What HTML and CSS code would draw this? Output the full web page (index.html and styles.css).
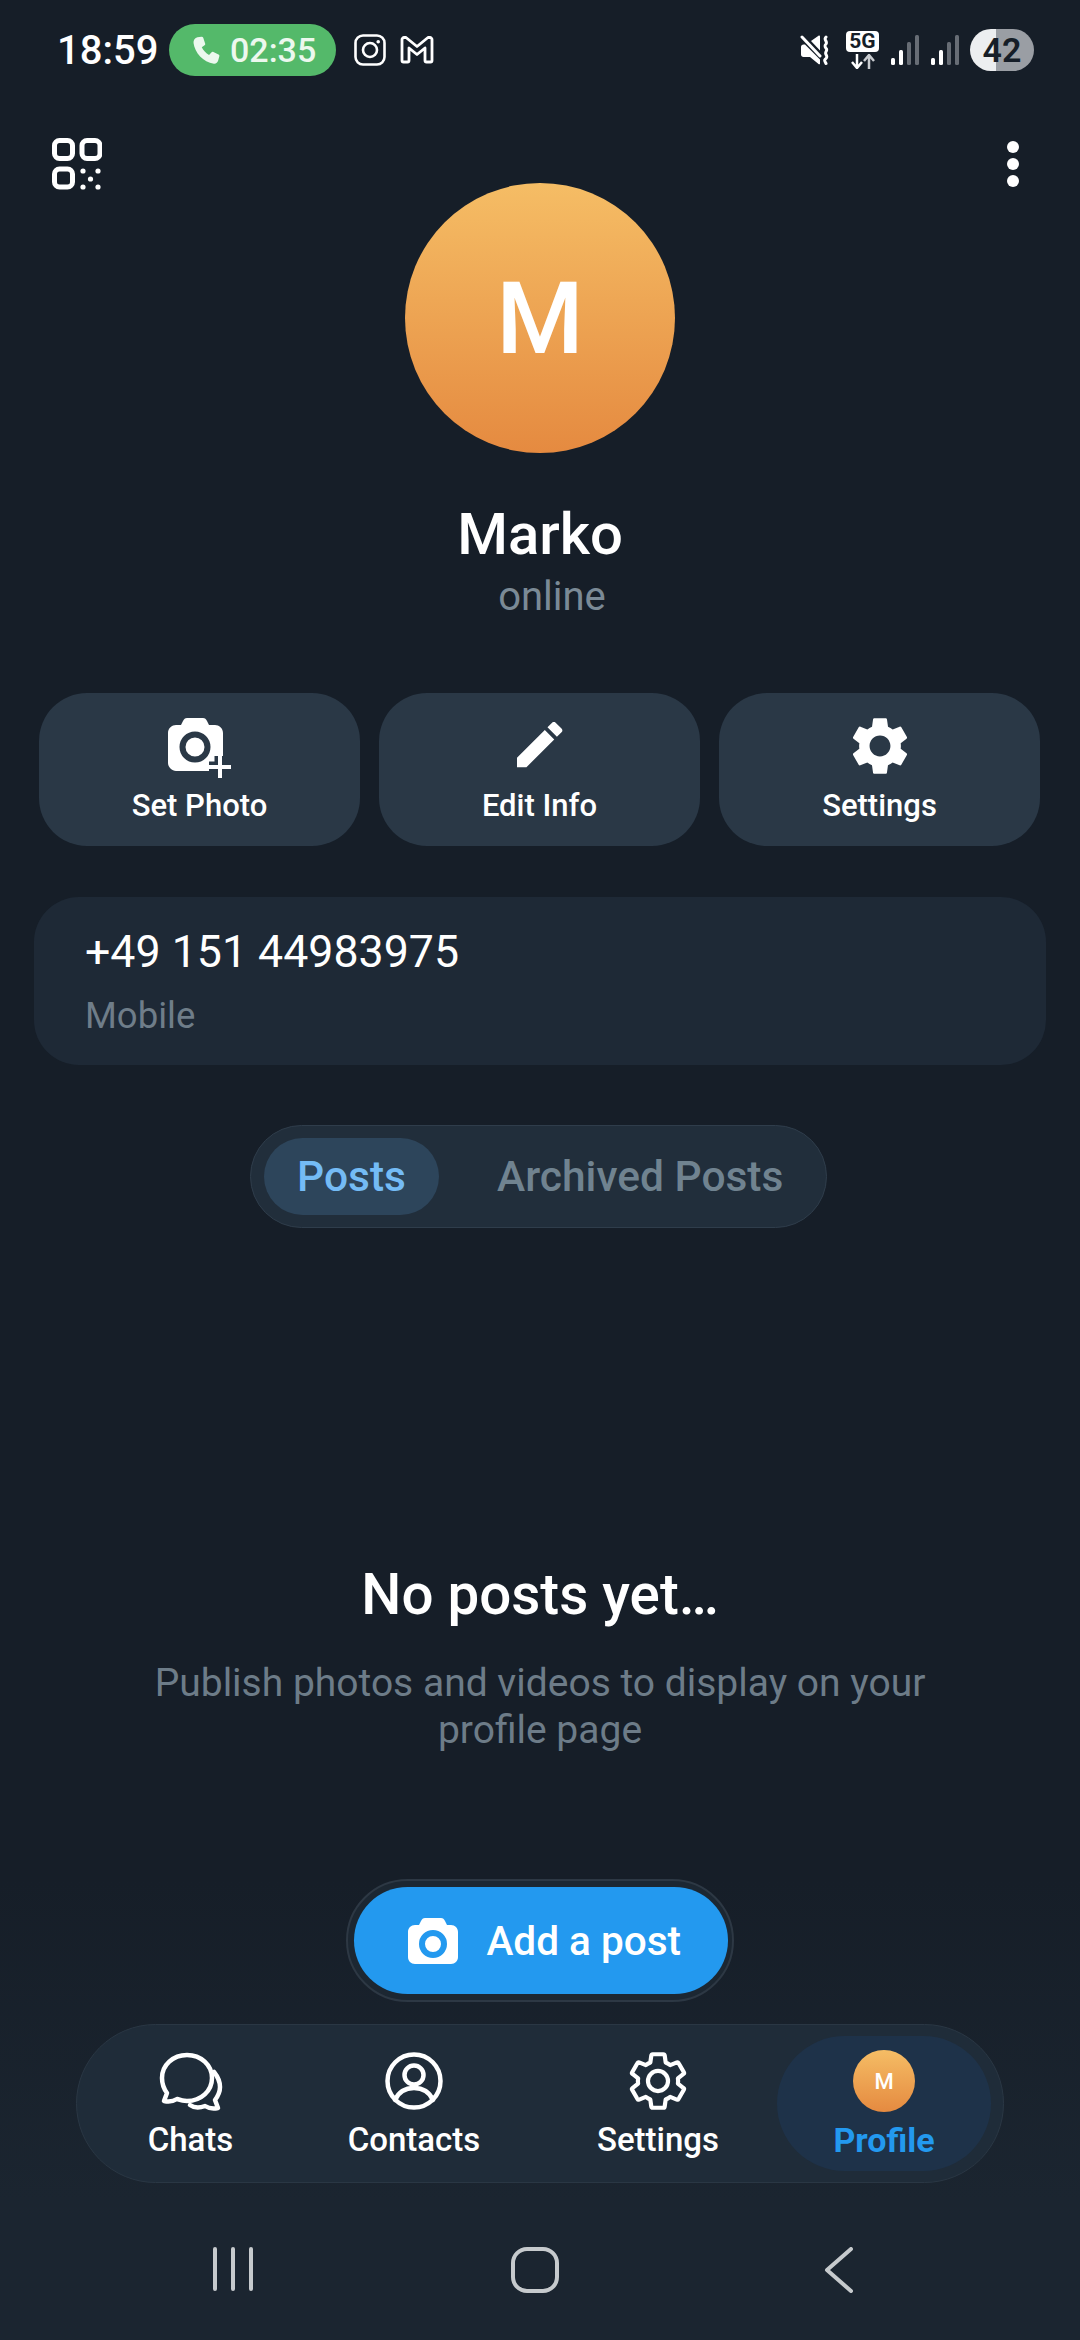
FILE: index.html
```html
<!DOCTYPE html>
<html lang="en">
<head>
<meta charset="utf-8">
<title>Profile</title>
<link rel="stylesheet" href="styles.css">
</head>
<body>
<div class="page">
  <main class="main">
    <div class="status">
      <div class="status-left">
        <span class="time">18:59</span>
        <span class="call">
          <svg class="call-icon" viewBox="3 1.500 19 20"><path d="M6.6 2.4 9.3 2c.6-.1 1.100.2 1.300.7l1.300 3.900c.2.5 0 1-.4 1.300L9.600 9.300c.9 2 2.900 4.200 5 5.300l1.600-1.800c.4-.4.9-.5 1.400-.3l3.500 1.700c.5.2.8.8.6 1.300l-.8 2.900c-.4 1.400-1.600 2.400-3 2.200C10.600 19.500 4.700 13 3.900 6.300 3.700 4.400 4.900 2.800 6.600 2.400z"/></svg>
          <span>02:35</span>
        </span>
        <svg class="ig" viewBox="0 0 32 32"><rect x="1.500" y="1.500" width="29" height="29" rx="7.500"/><circle cx="16" cy="16" r="7"/><circle class="dot" cx="24.200" cy="7.800" r="1.800"/></svg>
        <svg class="gm" viewBox="0 0 34 28"><path d="M2 3.500C2 2.500 3 1.500 4 1.500h2l11 9 11-9h2c1 0 2 1 2 2v21c0 1-.6 1.500-1.500 1.500h-4c-.9 0-1.500-.5-1.500-1.500V12l-8 6.500L9 12v12.500c0 1-.6 1.500-1.500 1.500h-4c-.9 0-1.500-.5-1.500-1.500z"/></svg>
      </div>
      <div class="status-right">
        <svg class="mute" viewBox="0 0 30 30"><path class="f" d="M1 12c0-1.500 1-2.500 2.500-2.500H5l15 15V29c-.3.4-1 .5-1.500.1L10 22H3.500C2 22 1 21 1 19.500zM11 6l7.500-5.300c.6-.4 1.500 0 1.500.8v14z"/><path class="s" d="M2 2l18 19"/><path class="s" d="M26 2c-3 3 2 4 0 7-2 2-1 3 .5 5 1 2-2 3-.5 5.500 1 2 1.500 3-1 5-1 1 0 2 1 4"/></svg>
        <span class="net">
          <span class="g5">5G</span>
          <svg class="arrows" viewBox="0 0 26 15"><path d="M7 0v13M2 8l5 6 5-6"/><path class="up" d="M19 15V2M14 7l5-6 5 6"/></svg>
        </span>
        <svg class="sig" viewBox="0 0 28 30"><rect class="on" y="23" width="4" height="7" rx="1.500"/><rect class="on" x="8" y="15" width="4" height="15" rx="1.500"/><rect class="off" x="16" y="7" width="4" height="23" rx="1.500"/><rect class="off" x="24" width="4" height="30" rx="1.500"/></svg>
        <svg class="sig" viewBox="0 0 28 30"><rect class="on" y="23" width="4" height="7" rx="1.500"/><rect class="on" x="8" y="15" width="4" height="15" rx="1.500"/><rect class="off" x="16" y="7" width="4" height="23" rx="1.500"/><rect class="off" x="24" width="4" height="30" rx="1.500"/></svg>
        <span class="batt">42</span>
      </div>
    </div>

    <div class="hero">
      <svg class="qr" viewBox="0 0 50 52"><rect x="2.500" y="2.500" width="18" height="18" rx="5"/><rect x="30" y="2.500" width="18" height="18" rx="5"/><rect x="2.500" y="31" width="18" height="18" rx="5"/><circle class="d" cx="31" cy="33" r="2.600"/><circle class="d" cx="46" cy="33" r="2.600"/><circle class="d" cx="38.500" cy="41" r="2.600"/><circle class="d" cx="31" cy="49" r="2.600"/><circle class="d" cx="46" cy="49" r="2.600"/></svg>
      <div class="identity">
        <div class="avatar">M</div>
        <div class="name">Marko</div>
        <div class="presence">online</div>
      </div>
      <div class="kebab"><i></i><i></i><i></i></div>
    </div>

    <div class="actions">
      <div class="action">
        <svg class="act-icon" viewBox="0 0 66 62"><path class="w" d="M20 1h16c2 0 3 1 4 3l2 4h6c4 0 8 3 8 8v30c0 4-3 8-8 8H9c-4 0-8-4-8-8V16c0-5 4-8 8-8h5l2-4c1-2 2-3 4-3z"/><circle class="lens" cx="28" cy="30" r="12.500"/><path class="plus-gap" d="M53 39v22M42 50h22"/><path class="plus" d="M53 39v22M42 50h22"/></svg>
        <span>Set Photo</span>
      </div>
      <div class="action">
        <svg class="act-icon pen" viewBox="3 3 18.300 18.300"><path class="w" d="M3 17.250V21h3.750L17.810 9.940l-3.750-3.750L3 17.250zM20.710 7.040a1 1 0 0 0 0-1.410l-2.340-2.340a1 1 0 0 0-1.410 0l-1.830 1.830 3.750 3.750 1.830-1.830z"/></svg>
        <span>Edit Info</span>
      </div>
      <div class="action">
        <svg class="act-icon gear" viewBox="2.600 2 18.800 20"><path class="w" d="M19.140 12.940c.04-.3.06-.61.06-.94 0-.32-.02-.64-.07-.94l2.030-1.580c.18-.14.23-.41.12-.61l-1.920-3.320c-.12-.22-.37-.29-.59-.22l-2.390.96c-.5-.38-1.030-.7-1.620-.94l-.36-2.540c-.04-.24-.24-.41-.48-.41h-3.840c-.24 0-.43.17-.47.41l-.36 2.540c-.59.24-1.130.57-1.620.94l-2.390-.96c-.22-.08-.47 0-.59.22L2.740 8.870c-.12.21-.08.47.12.61l2.030 1.580c-.05.3-.09.63-.09.94s.02.64.07.94l-2.030 1.580c-.18.14-.23.41-.12.61l1.920 3.320c.12.22.37.29.59.22l2.390-.96c.5.38 1.030.7 1.620.94l.36 2.540c.05.24.24.41.48.41h3.840c.24 0 .44-.17.47-.41l.36-2.540c.59-.24 1.130-.56 1.620-.94l2.390.96c.22.08.47 0 .59-.22l1.920-3.320c.12-.22.07-.47-.12-.61l-2.010-1.580zM12 15.600c-1.980 0-3.600-1.620-3.600-3.600s1.620-3.600 3.600-3.600 3.600 1.620 3.600 3.600-1.620 3.600-3.600 3.600z"/></svg>
        <span>Settings</span>
      </div>
    </div>

    <div class="phone">
      <div class="phone-num">+49 151 44983975</div>
      <div class="phone-label">Mobile</div>
    </div>

    <div class="tabs-wrap">
      <div class="tabs">
        <span class="tab active">Posts</span>
        <span class="tab">Archived Posts</span>
      </div>
    </div>

    <div class="empty">
      <div class="empty-title">No posts yet…</div>
      <div class="empty-sub">Publish photos and videos to display on your<br>profile page</div>
    </div>

    <div class="cta-wrap">
      <div class="cta-ring">
        <div class="cta">
          <svg class="cta-icon" viewBox="0 0 52 48"><path class="w" d="M18 1h16c2 0 3 1 4 3l2 4h4c4 0 7 3 7 7v25c0 4-3 7-7 7H8c-4 0-7-3-7-7V15c0-4 3-7 7-7h4l2-4c1-2 2-3 4-3z"/><circle class="cta-lens" cx="26" cy="27" r="11"/></svg>
          <span>Add a post</span>
        </div>
      </div>
    </div>
  </main>

  <footer class="footer">
    <nav class="nav">
      <div class="nav-item item-chats">
        <svg class="nav-icon chats-icon" viewBox="0 0 66 58"><path d="M29 3C15 3 4 13 4 26c0 6 2 11 5 15l-3 8c5 1 10 0 13-2 3 1 6 2 10 2 14 0 25-10 25-23S43 3 29 3z"/><path d="M56 20c4 5 6 10 6 15 0 5-2 9-5 13l3 8c-5 1-10 0-13-2-5 2-11 2-15-1"/></svg>
        <span>Chats</span>
      </div>
      <div class="nav-item item-contacts">
        <svg class="nav-icon" viewBox="0 0 60 58"><circle cx="30" cy="29" r="26.500"/><circle cx="30" cy="23" r="9.500"/><path d="M11 48c4-9 11-12 19-12s15 3 19 12"/></svg>
        <span>Contacts</span>
      </div>
      <div class="nav-item item-settings">
        <svg class="nav-icon" viewBox="2 1.600 20 20.800"><path class="thin" d="M19.140 12.940c.04-.3.06-.61.06-.94 0-.32-.02-.64-.07-.94l2.030-1.580c.18-.14.23-.41.12-.61l-1.920-3.320c-.12-.22-.37-.29-.59-.22l-2.390.96c-.5-.38-1.030-.7-1.620-.94l-.36-2.540c-.04-.24-.24-.41-.48-.41h-3.840c-.24 0-.43.17-.47.41l-.36 2.540c-.59.24-1.130.57-1.620.94l-2.390-.96c-.22-.08-.47 0-.59.22L2.740 8.870c-.12.21-.08.47.12.61l2.030 1.580c-.05.3-.09.63-.09.94s.02.64.07.94l-2.030 1.580c-.18.14-.23.41-.12.61l1.920 3.320c.12.22.37.29.59.22l2.390-.96c.5.38 1.030.7 1.620.94l.36 2.540c.05.24.24.41.48.41h3.840c.24 0 .44-.17.47-.41l.36-2.540c.59-.24 1.130-.56 1.620-.94l2.390.96c.22.08.47 0 .59-.22l1.920-3.320c.12-.22.07-.47-.12-.61l-2.010-1.580zM12 15.600c-1.980 0-3.600-1.620-3.600-3.600s1.620-3.600 3.600-3.600 3.600 1.620 3.600 3.600-1.620 3.600-3.600 3.600z"/></svg>
        <span>Settings</span>
      </div>
      <div class="nav-item item-profile">
        <div class="mini-avatar">M</div>
        <span>Profile</span>
      </div>
    </nav>
    <div class="sysnav">
      <svg class="sys recents" viewBox="0 0 42 44"><path d="M3 2v40M21 2v40M39 2v40"/></svg>
      <svg class="sys home" viewBox="0 0 48 46"><rect x="2" y="2" width="44" height="42" rx="14"/></svg>
      <svg class="sys back" viewBox="0 0 30 46"><path d="M27 2 3 23l24 21"/></svg>
    </div>
  </footer>
</div>
</body>
</html>
```

FILE: styles.css
```css
* { box-sizing: border-box; }
html, body { margin: 0; padding: 0; }
body {
  background: #161e28;
  color: #fff;
  font-family: Roboto, "Noto Sans", sans-serif;
}
.page {
  width: 1080px;
  height: 2340px;
  display: flex;
  flex-direction: column;
  overflow: hidden;
  background: linear-gradient(180deg, #161e28 1880px, #1b2530 2200px);
}
.main { flex: 1; display: flex; flex-direction: column; min-height: 0; }

/* status bar */
.status {
  height: 100px;
  padding: 0 46px 0 57px;
  display: flex;
  align-items: center;
  justify-content: space-between;
}
.status-left { display: flex; align-items: center; }
.time { font-size: 40px; font-weight: 500; width: 112px; }
.call {
  width: 167px;
  height: 52px;
  border-radius: 26px;
  background: #54b96a;
  color: #ecf8ee;
  display: flex;
  align-items: center;
  padding-left: 23px;
  gap: 10px;
  font-size: 34px;
  font-weight: 500;
}
.call-icon { width: 28px; height: 29px; fill: #ecf8ee; flex: none; }
.ig { width: 32px; height: 32px; margin-left: 18px; fill: none; stroke: #fff; stroke-width: 2.600; }
.ig .dot { fill: #fff; stroke: none; }
.gm { width: 36px; height: 28px; margin-left: 13px; fill: none; stroke: #fff; stroke-width: 2.800; stroke-linejoin: round; }
.status-right { display: flex; align-items: center; }
.mute { width: 30px; height: 30px; fill: none; }
.mute .f { fill: #fff; }
.mute .s { stroke: #fff; stroke-width: 3; stroke-linecap: round; }
.net { width: 33px; margin-left: 16px; display: flex; flex-direction: column; align-items: center; gap: 2px; }
.g5 {
  width: 33px;
  height: 21px;
  border-radius: 4px;
  background: #fff;
  color: #161e28;
  font-size: 21px;
  line-height: 21px;
  font-weight: 700;
  text-align: center;
}
.arrows { width: 26px; height: 15px; fill: none; stroke: #fff; stroke-width: 2.500; }
.arrows .up { stroke: #c9ccd0; }
.sig { width: 28px; height: 30px; margin-left: 12px; }
.sig .on { fill: #fff; }
.sig .off { fill: #676d75; }
.batt {
  width: 64px;
  height: 42px;
  margin-left: 11px;
  border-radius: 21px;
  background: linear-gradient(90deg, #eceef0 41%, #9a9ea4 41%);
  color: #161e28;
  font-size: 34px;
  line-height: 42px;
  font-weight: 600;
  text-align: center;
}

/* hero */
.hero {
  padding: 38px 52px 0;
  display: grid;
  grid-template-columns: 1fr auto 1fr;
  align-items: start;
}
.qr { width: 50px; height: 52px; fill: none; stroke: #fff; stroke-width: 5; }
.qr .d { fill: #fff; stroke: none; }
.identity { display: flex; flex-direction: column; align-items: center; margin-top: 45px; }
.avatar {
  width: 270px;
  height: 270px;
  border-radius: 50%;
  background: linear-gradient(180deg, #f5bd65, #e58a40);
  display: flex;
  align-items: center;
  justify-content: center;
  font-size: 100px;
  font-weight: 500;
}
.name { margin-top: 49px; font-size: 58px; line-height: 64px; font-weight: 500; }
.presence { margin-left: 24px; font-size: 40px; line-height: 46px; margin-top: 8px; color: #7b8a96; }
.kebab { justify-self: end; display: flex; flex-direction: column; gap: 5px; padding-top: 3px; margin-right: 9px; }
.kebab i { width: 12px; height: 12px; border-radius: 50%; background: #fff; display: block; }

/* actions */
.actions { margin-top: 73px; padding: 0 40px 0 39px; display: grid; grid-template-columns: repeat(3, 1fr); gap: 19px; }
.action {
  height: 153px;
  border-radius: 48px;
  background: #2a3846;
  display: flex;
  flex-direction: column;
  align-items: center;
  font-size: 31px;
  font-weight: 500;
  position: relative;
}
.action span { position: absolute; top: 94px; line-height: 38px; }
.act-icon { margin-top: 24px; width: 66px; height: 62px; }
.w { fill: #fff; }
.lens { fill: #fff; stroke: #2a3846; stroke-width: 6; }
.plus-gap { fill: none; stroke: #2a3846; stroke-width: 11; }
.plus { fill: none; stroke: #fff; stroke-width: 4; }
.pen { margin-top: 29px; width: 48px; height: 46px; }
.gear { width: 56px; height: 58px; }

/* phone */
.phone {
  margin: 51px 34px 0;
  height: 168px;
  border-radius: 45px;
  background: #1e2936;
  padding: 30px 51px 0;
}
.phone-num { font-size: 44.700px; line-height: 50px; }
.phone-label { font-size: 36.500px; line-height: 42px; margin-top: 18px; color: #6f7d89; }

/* tabs */
.tabs-wrap { margin: 60px 3px 0 0; display: flex; justify-content: center; }
.tabs {
  width: 577px;
  height: 103px;
  border-radius: 52px;
  border: 1px solid #2f3d4b;
  background: #212e3b;
  display: flex;
  align-items: center;
  padding-left: 13px;
  font-size: 42.500px;
  font-weight: 500;
}
.tab { color: #708390; line-height: 78px; height: 77px; }
.tab.active {
  width: 175px;
  text-align: center;
  border-radius: 39px;
  background: #2d455b;
  color: #74bbf5;
  margin-right: 58px;
}

/* empty */
.empty { margin-top: 335px; text-align: center; }
.empty-title { font-size: 56.500px; line-height: 64px; font-weight: 500; }
.empty-sub { margin-top: 33px; font-size: 39px; line-height: 47px; color: #6d7c88; }

/* cta */
.cta-wrap { margin-top: auto; display: flex; justify-content: center; }
.cta-ring {
  width: 388px;
  height: 123px;
  border-radius: 62px;
  background: #1c2732;
  border: 2px solid #2d3844;
  padding: 6px 4px 6px 6px;
  margin-left: -1px;
}
.cta {
  height: 107px;
  border-radius: 54px;
  background: #2399ef;
  display: flex;
  align-items: center;
  padding-left: 53px;
  gap: 28px;
  font-size: 40.500px;
  font-weight: 500;
}
.cta-icon { width: 52px; height: 48px; }
.cta-lens { fill: #fff; stroke: #2399ef; stroke-width: 6; }

/* bottom nav */
.footer { margin-top: 22px; }
.nav {
  margin: 0 76px;
  height: 159px;
  border-radius: 80px;
  background: #1f2c39;
  border: 1px solid #2a3744;
  position: relative;
  display: flex;
  font-size: 33px;
  font-weight: 500;
}
.nav-item { display: flex; flex-direction: column; align-items: center; padding-top: 27px; position: relative; }
.nav-item span { line-height: 40px; margin-top: 10px; }
.item-chats { width: 85px; margin-left: 71px; }
.item-contacts { width: 134px; margin-left: 114px; }
.item-settings { width: 122px; margin-left: 116px; }
.item-profile {
  width: 214px;
  height: 135px;
  margin: 11px 0 0 58px;
  border-radius: 68px;
  background: #1e3249;
  color: #2399ef;
  font-size: 34px;
  font-weight: 700;
  padding-top: 14px;
}
.item-profile span { margin-top: 8px; }
.nav-icon { width: 64px; height: 58px; fill: none; stroke: #fff; stroke-width: 4.500; stroke-linejoin: round; stroke-linecap: round; overflow: visible; flex: none; }
.chats-icon { width: 66px; }
.nav-icon .thin { stroke-width: 1.500; }
.mini-avatar {
  width: 62px;
  height: 62px;
  border-radius: 50%;
  background: linear-gradient(180deg, #f5bd65, #e58a40);
  color: #fff;
  font-size: 22px;
  font-weight: 500;
  display: flex;
  align-items: center;
  justify-content: center;
  flex: none;
}

/* system nav */
.sysnav { height: 157px; position: relative; display: flex; align-items: flex-start; padding-top: 64px; }
.sys { fill: none; stroke: #c6cacd; stroke-width: 4; stroke-linecap: round; stroke-linejoin: round; }
.recents { width: 42px; height: 44px; margin-left: 212px; }
.home { width: 48px; height: 46px; margin-left: 257px; }
.back { width: 30px; height: 46px; margin-left: 265px; }
```
